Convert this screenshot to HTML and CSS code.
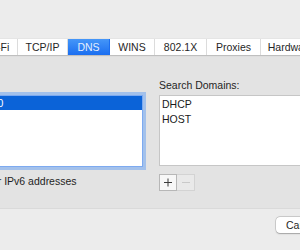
FILE: index.html
```
<!DOCTYPE html>
<html>
<head>
<meta charset="utf-8">
<link rel="stylesheet" href="styles.css">
</head>
<body>
<div class="window">
  <div class="tabs">
    <div class="tab t1">Wi-Fi</div>
    <div class="tab t2">TCP/IP</div>
    <div class="tab t3 active">DNS</div>
    <div class="tab t4">WINS</div>
    <div class="tab t5">802.1X</div>
    <div class="tab t6">Proxies</div>
    <div class="tab t7">Hardware</div>
  </div>
  <div class="panel">
    <div class="col left">
      <div class="label hidden-left">DNS Servers:</div>
      <div class="list focused">
        <div class="row sel">192.168.0.10</div>
      </div>
      <div class="caption">IPv4 or IPv6 addresses</div>
    </div>
    <div class="col right">
      <div class="label">Search Domains:</div>
      <div class="list">
        <div class="row">DHCP</div>
        <div class="row">HOST</div>
      </div>
      <div class="btns">
        <div class="btn add"><svg width="18" height="17" viewBox="0 0 18 17"><path d="M5 8.5h8M9 4.5v8" stroke="#3a3a3a" stroke-width="1" fill="none"/></svg></div>
        <div class="btn remove"><svg width="18" height="17" viewBox="0 0 18 17"><path d="M5 8.5h8" stroke="#c9c9c9" stroke-width="1" fill="none"/></svg></div>
      </div>
    </div>
  </div>
  <div class="footer">
    <div class="cancel">Cancel</div>
  </div>
</div>
</body>
</html>
```
FILE: styles.css
```
* { box-sizing: border-box; margin: 0; padding: 0; }
html, body { width: 300px; height: 250px; overflow: hidden; }
body {
  background: #ececec;
  font-family: "Liberation Sans", Arial, sans-serif;
  font-size: 10.5px;
  color: #1f1f1f;
}
.window { display: flex; flex-direction: column; height: 250px; }

.tabs {
  display: flex;
  flex: none;
  height: 16px;
  margin-top: 39px;
  margin-left: -24px;
  position: relative;
  z-index: 1;
  box-shadow: 0 1px 1px rgba(0,0,0,0.13), 0 0 0 0.5px rgba(0,0,0,0.06);
}
.tab {
  flex: none;
  background: #fff;
  border-right: 1px solid #dcdcdc;
  text-align: center;
  line-height: 16px;
  color: #262626;
  white-space: nowrap;
}
.t1 { width: 42px; padding-left: 1px; }
.t2 { width: 50px; }
.t3 { width: 42px; }
.t4 { width: 45px; }
.t5 { width: 52px; }
.t6 { width: 54px; }
.t7 { width: 60px; }
.tab.active {
  background: linear-gradient(#4596f8, #1b6ef0);
  color: #e4eefd;
  border-right-color: #1b6ef0;
}

.panel {
  flex: none;
  height: 154px;
  background: #e3e3e3;
  border-bottom: 1px solid #dadada;
  display: flex;
  gap: 16.5px;
  padding-top: 24px;
}
.col { flex: none; display: flex; flex-direction: column; }
.left { width: 205.5px; margin-left: -63px; }
.right { width: 170px; }

.label { height: 13px; line-height: 13px; margin-bottom: 3px; white-space: nowrap; }
.label.hidden-left { margin-left: -8px; }

.list {
  background: #fff;
  border: 1px solid #c6c6c6;
  height: 71px;
}
.left .list { height: 72px; }
.list.focused {
  border-color: #7daaf0;
  box-shadow: 0 0 0 3px rgba(120, 170, 240, 0.6);
}
.row {
  height: 15px;
  line-height: 15px;
  padding-left: 2px;
  white-space: nowrap;
  color: #1a1a1a;
}
.row.sel {
  height: 14px;
  line-height: 14px;
  padding-left: 4px;
  background: #0b63d8;
  color: #fff;
}
.right .list { padding-top: 1px; }

.caption {
  margin-top: 8px;
  margin-left: 31px;
  line-height: 13px;
  white-space: nowrap;
}

.btns { display: flex; margin-top: 8px; }
.btn {
  width: 18px;
  height: 17px;
  border: 1px solid #b7b7b7;
  background: #f7f7f7;
  display: flex;
  align-items: center;
  justify-content: center;
}
.btn svg { display: block; flex: none; }
.btn.remove {
  border-left: none;
  border-color: #d3d3d3;
  background: #e9e9e9;
}

.footer {
  flex: 1;
  display: flex;
  align-items: flex-start;
  padding-top: 8px;
  padding-left: 276px;
}
.cancel {
  flex: none;
  height: 16px;
  line-height: 16px;
  padding: 0 10px;
  background: #fff;
  border-radius: 4px;
  box-shadow: 0 0 0 0.5px rgba(0,0,0,0.22), 0 0.5px 1.5px rgba(0,0,0,0.22);
  color: #1f1f1f;
  white-space: nowrap;
}
```
